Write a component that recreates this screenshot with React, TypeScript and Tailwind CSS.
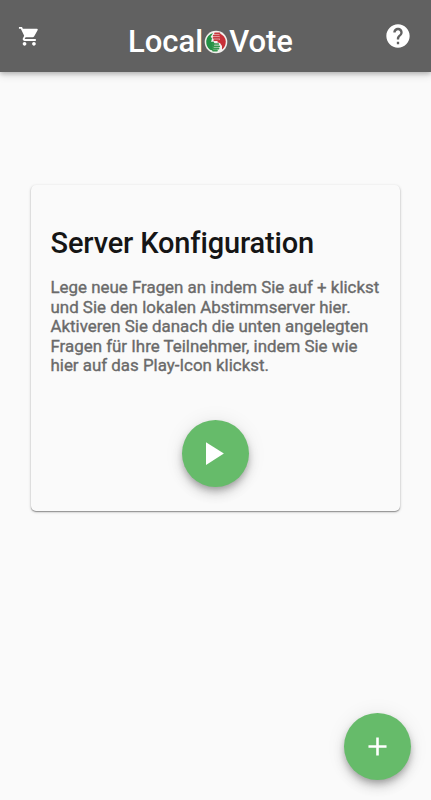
import React from "react";
import { MdShoppingCart, MdHelp, MdPlayArrow, MdAdd } from "react-icons/md";

function HandsLogo() {
  return (
    <svg viewBox="0 0 24 24" className="mx-px h-6 w-6 shrink-0" aria-hidden="true">
      <circle cx="12" cy="12" r="11.3" fill="#f1efec" />
      <path d="M9 3Q3 4.8 2.2 11Q2 16.5 6 19.8L9 20.5L10.5 13.5L9.5 11.4L7.2 12L8 8L6.6 7Z" fill="#239044" />
      <path d="M8.5 14H14.3M8.5 16.3H15.2M8.5 18.6H14.6M9 20.6H13" stroke="#35984d" strokeWidth="1.7" strokeLinecap="round" />
      <path d="M15.3 3.2Q21.3 5.5 21.8 11.5Q21.7 17 18 19.6L18 16L16 13L13.2 12.3L14.2 10.2L16 9.7Z" fill="#c72f38" />
      <path d="M11 3.4H15.5M9.7 5.6H15.5M9.5 7.9H15.5M10.2 10.1H15" stroke="#c83a40" strokeWidth="1.7" strokeLinecap="round" />
    </svg>
  );
}

function RoundButton({ label, children }: { label: string; children: React.ReactNode }) {
  return (
    <button
      aria-label={label}
      className="flex h-[67px] w-[67px] shrink-0 items-center justify-center rounded-full bg-[#66bb6a] text-white shadow-[0_4px_6px_-1px_rgba(0,0,0,0.24),0_7px_12px_rgba(0,0,0,0.14),0_1px_20px_rgba(0,0,0,0.08)]"
    >
      {children}
    </button>
  );
}

export default function App() {
  return (
    <div className="flex h-[800px] w-full flex-col overflow-hidden bg-[#fafafa] font-[Roboto,sans-serif]">
      <header className="flex h-[72px] shrink-0 items-center justify-between bg-[#616161] pr-[19.5px] pl-[18px] text-white shadow-[0_2px_4px_rgba(0,0,0,0.2),0_4px_8px_rgba(0,0,0,0.1)]">
        <MdShoppingCart className="h-[22.5px] w-[22.5px]" />
        <h1 className="mt-[12px] mr-[3px] flex items-center text-[31px] leading-9 font-medium">
          <span>Local</span>
          <HandsLogo />
          <span>Vote</span>
        </h1>
        <MdHelp className="h-7 w-7" />
      </header>
      <main className="flex flex-1 flex-col">
        <section className="mx-[31px] mt-[113px] flex h-[326px] flex-col rounded-[5px] bg-[#fafafa] pr-5 pl-[19.5px] shadow-[0_1px_1px_rgba(0,0,0,0.3),0_1px_3px_rgba(0,0,0,0.24)]">
          <h2 className="mt-10 text-[29px] leading-9 font-medium tracking-[-0.15px] whitespace-nowrap text-[#151515]">Server Konfiguration</h2>
          <p className="mt-[17px] text-[16.9px] leading-[19.6px] whitespace-nowrap text-[#6a6a6a] [-webkit-text-stroke:0.35px_#6a6a6a]">
            Lege neue Fragen an indem Sie auf + klickst<br />
            und Sie den lokalen Abstimmserver hier.<br />
            Aktiveren Sie danach die unten angelegten<br />
            Fragen für Ihre Teilnehmer, indem Sie wie<br />
            hier auf das Play-Icon klickst.
          </p>
          <div className="mt-auto mb-6 flex justify-center">
            <RoundButton label="Start">
              <MdPlayArrow className="mr-[6px] h-[39px] w-[39px]" />
            </RoundButton>
          </div>
        </section>
        <div className="mt-auto mr-5 mb-5 flex justify-end">
          <RoundButton label="Neue Frage">
            <MdAdd className="h-[31px] w-[31px]" />
          </RoundButton>
        </div>
      </main>
    </div>
  );
}
